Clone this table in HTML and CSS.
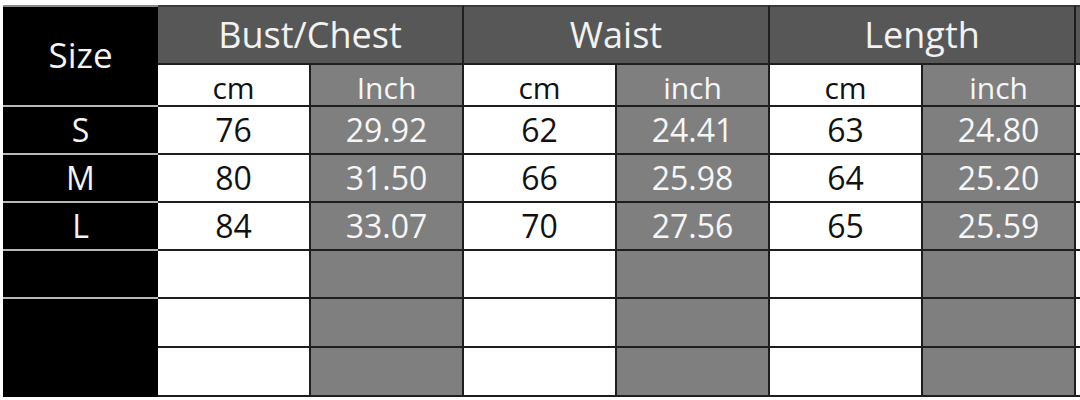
FILE: index.html
```html
<!DOCTYPE html>
<html lang="en">
<head>
<meta charset="utf-8">
<title>Size Chart</title>
<link rel="stylesheet" href="styles.css">
</head>
<body>
<table class="chart">
  <colgroup>
    <col class="c-size">
    <col class="c-col"><col class="c-col">
    <col class="c-col"><col class="c-col">
    <col class="c-col"><col class="c-col">
    <col class="c-extra">
  </colgroup>
  <thead>
    <tr class="r-head">
      <th class="size size-head" rowspan="2">Size</th>
      <th class="grp" colspan="2">Bust/Chest</th>
      <th class="grp" colspan="2">Waist</th>
      <th class="grp" colspan="2">Length</th>
      <th class="grp extra"></th>
    </tr>
    <tr class="r-sub">
      <th class="cm">cm</th><th class="in">Inch</th>
      <th class="cm">cm</th><th class="in">inch</th>
      <th class="cm">cm</th><th class="in">inch</th>
      <th class="cm extra"></th>
    </tr>
  </thead>
  <tbody>
    <tr class="r-data">
      <td class="size">S</td>
      <td class="cm">76</td><td class="in">29.92</td>
      <td class="cm">62</td><td class="in">24.41</td>
      <td class="cm">63</td><td class="in">24.80</td>
      <td class="cm extra"></td>
    </tr>
    <tr class="r-data">
      <td class="size">M</td>
      <td class="cm">80</td><td class="in">31.50</td>
      <td class="cm">66</td><td class="in">25.98</td>
      <td class="cm">64</td><td class="in">25.20</td>
      <td class="cm extra"></td>
    </tr>
    <tr class="r-data">
      <td class="size">L</td>
      <td class="cm">84</td><td class="in">33.07</td>
      <td class="cm">70</td><td class="in">27.56</td>
      <td class="cm">65</td><td class="in">25.59</td>
      <td class="cm extra"></td>
    </tr>
    <tr class="r-data">
      <td class="size"></td>
      <td class="cm"></td><td class="in"></td>
      <td class="cm"></td><td class="in"></td>
      <td class="cm"></td><td class="in"></td>
      <td class="cm extra"></td>
    </tr>
    <tr class="r-data r-tall">
      <td class="size size-merged" rowspan="2"></td>
      <td class="cm"></td><td class="in"></td>
      <td class="cm"></td><td class="in"></td>
      <td class="cm"></td><td class="in"></td>
      <td class="cm extra"></td>
    </tr>
    <tr class="r-data r-tall">
      <td class="cm"></td><td class="in"></td>
      <td class="cm"></td><td class="in"></td>
      <td class="cm"></td><td class="in"></td>
      <td class="cm extra"></td>
    </tr>
  </tbody>
</table>
</body>
</html>
```

FILE: styles.css
```css
html, body {
  margin: 0;
  padding: 0;
  background: #ffffff;
  overflow: hidden;
}

body {
  width: 1080px;
  height: 400px;
  font-family: "Open Sans", "Noto Sans", "DejaVu Sans", sans-serif;
}

.chart {
  table-layout: fixed;
  border-collapse: separate;
  border-spacing: 0;
  width: 1077px;
  margin: 5px 0 0 3px;
}

.c-size { width: 155px; }
.c-col { width: 153px; }
.c-extra { width: 4px; }

.chart th,
.chart td {
  padding: 0;
  text-align: center;
  vertical-align: middle;
  line-height: 1;
  font-weight: 400;
  box-sizing: border-box;
  border-right: 2px solid #1e1e1e;
  border-bottom: 2px solid #1e1e1e;
  overflow: hidden;
  white-space: nowrap;
}

.r-head { height: 60px; }
.r-sub { height: 42px; }
.r-data { height: 48px; }
.r-tall { height: 49px; }

.r-head th {
  border-top: 2px solid #3a3a3a;
}

.grp {
  background: #575757;
  color: #f2f2f2;
  font-size: 36px;
  padding-bottom: 2px;
}

.chart .size {
  background: #000000;
  color: #f4f4f4;
  border-right: 0;
  border-bottom: 2px solid #b8b8b8;
  font-size: 32px;
}

.chart .size-head {
  font-size: 35px;
  border-top: 2px solid #8a8a8a;
  padding-bottom: 4px;
}

.chart .size-merged {
  border-bottom: 2px solid #000000;
}

.cm {
  background: #ffffff;
  color: #111111;
}

.in {
  background: #7f7f7f;
  color: #f6f6f6;
}

.chart .extra {
  border-right: 0;
}

.r-sub th {
  font-size: 30px;
  padding-top: 5px;
}

.r-data td {
  font-size: 32px;
}
```
